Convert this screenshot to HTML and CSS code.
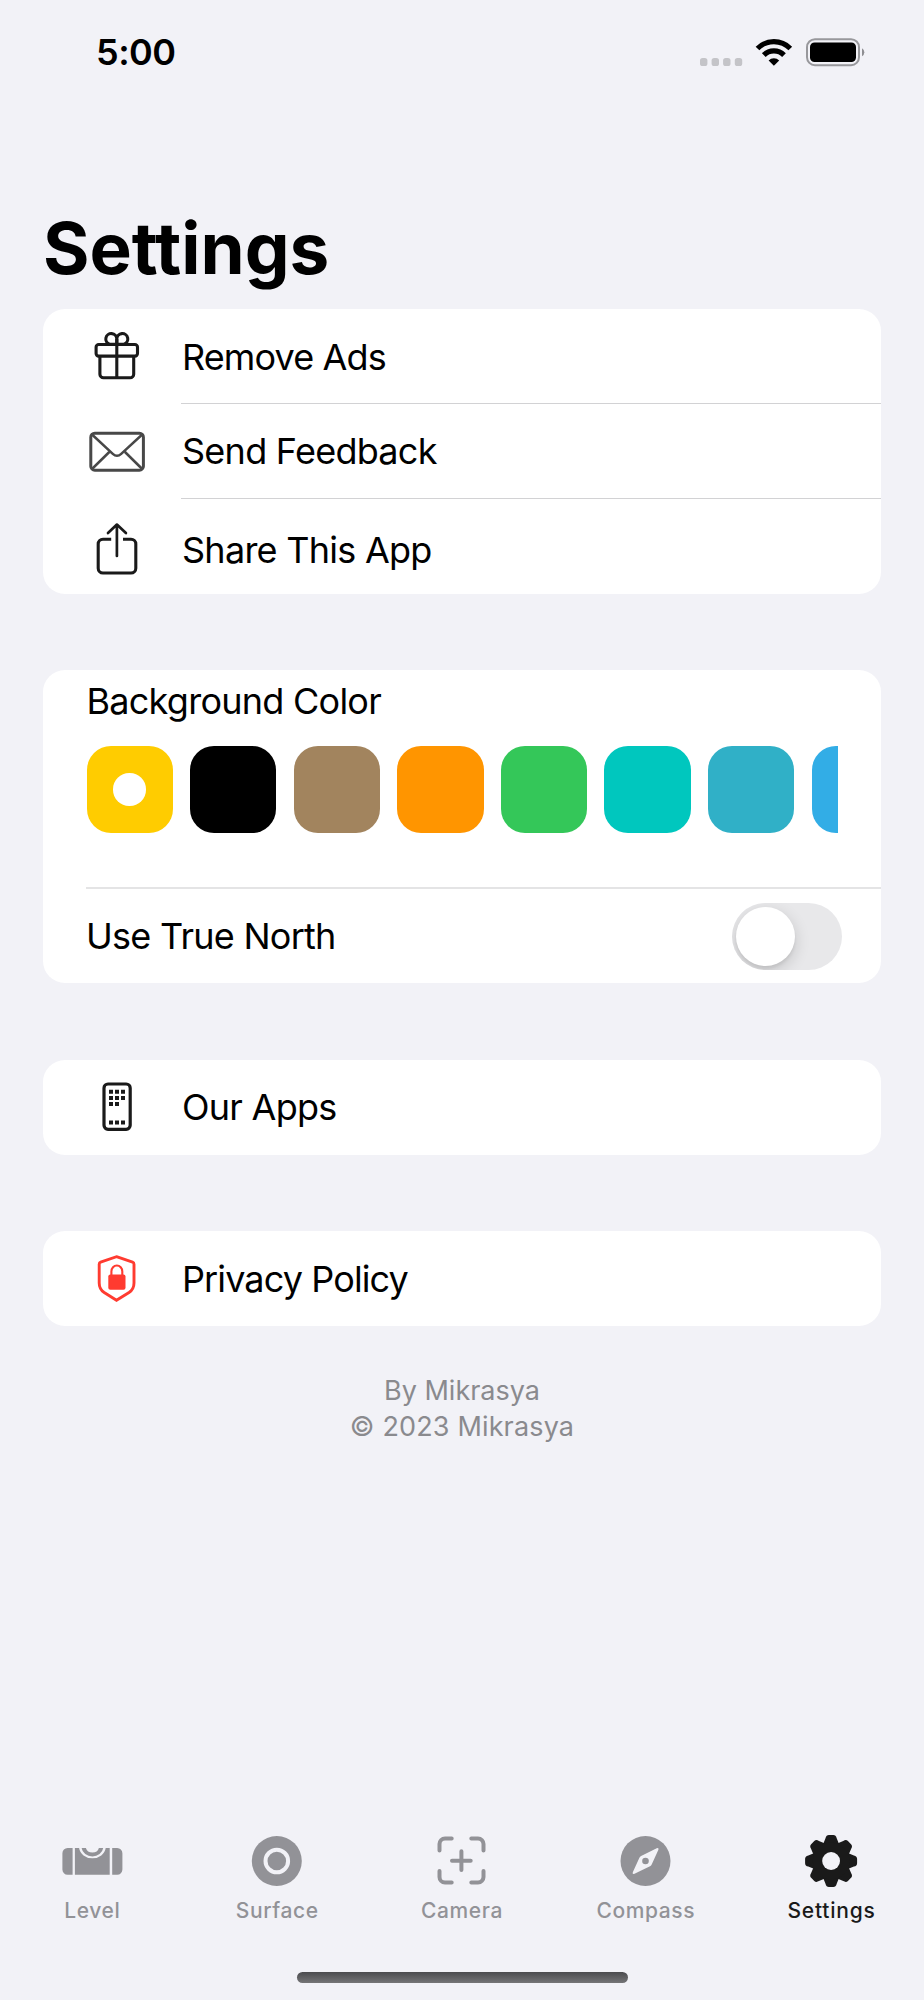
FILE: index.html
```html
<!DOCTYPE html>
<html lang="en">
<head>
<meta charset="utf-8">
<title>Settings</title>
<link rel="stylesheet" href="styles.css">
</head>
<body>
<div class="screen">
  <header class="status">
    <span class="time">5:00</span>
    <svg class="status-icons" width="168" height="32" viewBox="698 36 168 32">
      <g fill="#c4c4c8">
        <rect x="700" y="58" width="7.4" height="8" rx="2.6"/><rect x="711.6" y="58" width="7.4" height="8" rx="2.6"/>
        <rect x="723.1" y="58" width="7.4" height="8" rx="2.6"/><rect x="734.8" y="58" width="7.4" height="8" rx="2.6"/>
      </g>
      <g fill="none" stroke="#000" stroke-width="5.2">
        <path d="M757.5 48.5A23.2 23.2 0 0 1 790.3 48.5"/>
        <path d="M763.8 55.1A14.2 14.2 0 0 1 784 55.1"/>
      </g>
      <path d="M773.9 65.8L768.6 60.4A7.6 7.6 0 0 1 779.2 60.4Z"/>
      <rect x="807" y="39.2" width="52" height="26" rx="8" fill="none" stroke="#98989c" stroke-width="2"/>
      <rect x="810" y="42.5" width="46" height="19.5" rx="4.6"/>
      <path d="M862 48.2a4.6 4.6 0 0 1 0 8z" fill="#8e8e92"/>
    </svg>
  </header>

  <h1 class="title">Settings</h1>

  <main class="groups">
    <section class="card">
      <div class="row">
        <svg class="icon" width="60" height="60" viewBox="0 0 60 60" fill="none" stroke="#1a1a1a" stroke-width="3.1">
          <rect x="9.1" y="17.5" width="41.4" height="11.6" rx="2.6"/>
          <path d="M12.9 29.1V47.2a3.6 3.6 0 0 0 3.6 3.6h26.6a3.6 3.6 0 0 0 3.6-3.6V29.1M29.8 12V51"/>
          <path d="M29.8 17.3h-7.2a5.5 5.5 0 1 1 7.2-5.4zm0 0h7.2a5.5 5.5 0 1 0-7.2-5.4z"/>
        </svg>
        <span class="label remove">Remove Ads</span>
      </div>
      <div class="row high">
        <svg class="icon" width="60" height="60" viewBox="0 0 60 60" fill="none" stroke="#484848" stroke-width="3">
          <rect x="3.8" y="11.2" width="52.6" height="37" rx="4"/>
          <path d="M5 12.500l20.800 19.400q4.200 3.800 8.400 0L55.200 12.500M5 47l17.300-17M55.200 47L38 30" stroke-width="2.5"/>
        </svg>
        <span class="label feedback">Send Feedback</span>
      </div>
      <div class="row low">
        <svg class="icon" width="60" height="60" viewBox="0 0 60 60" fill="none" stroke="#1a1a1a" stroke-width="3.1">
          <path d="M24.2 19.2H16a4.8 4.8 0 0 0-4.8 4.8V48.2a4.8 4.8 0 0 0 4.8 4.8H44a4.8 4.8 0 0 0 4.8-4.8V24a4.8 4.8 0 0 0-4.8-4.8H36"/>
          <path d="M29.9 36V5M21 13l8.9-8.4 9 8.4" stroke-width="2.7" stroke-linecap="round" stroke-linejoin="round"/>
        </svg>
        <span class="label">Share This App</span>
      </div>
    </section>

    <section class="card">
      <div class="colors">
        <span class="label">Background Color</span>
        <div class="swatches">
          <i class="swatch yellow"></i><i class="swatch black"></i><i class="swatch brown"></i><i class="swatch orange"></i>
          <i class="swatch green"></i><i class="swatch mint"></i><i class="swatch teal"></i><i class="swatch blue"></i>
        </div>
      </div>
      <div class="option">
        <span class="label">Use True North</span>
        <span class="toggle"><i class="knob"></i></span>
      </div>
    </section>

    <section class="card">
      <div class="row">
        <svg class="icon" width="60" height="60" viewBox="0 0 60 60">
          <rect x="17" y="7" width="26.2" height="45.3" rx="4" fill="none" stroke="#1a1a1a" stroke-width="3.2"/>
          <path fill="#1a1a1a" d="M22 12.8h4v4h-4zM28 12.8h4v4h-4zM34 12.8h4v4h-4zM22 18.9h4v4h-4zM28 18.9h4v4h-4zM34 18.9h4v4h-4zM22 25h4v4h-4zM28 25h4v4h-4zM22 43.6h4v4h-4zM28 43.6h4v4h-4zM34 43.6h4v4h-4z"/>
        </svg>
        <span class="label apps">Our Apps</span>
      </div>
    </section>

    <section class="card">
      <div class="row">
        <svg class="icon" width="60" height="60" viewBox="0 0 60 60">
          <path d="M29.5 7.7L45.6 13.2q1.4.5 1.4 2V34q0 6.200-5 9.500L29.500 51.200 17.200 43.500Q12.200 40.200 12.200 34V15.200q0-1.500 1.400-2z" fill="none" stroke="#ff3b30" stroke-width="2.9"/>
          <rect x="21.300" y="25.500" width="17.200" height="15.200" rx="2" fill="#ff3b30"/>
          <path d="M24.400 26.500V22.500a5.450 6 0 0 1 10.900 0V26.500" fill="none" stroke="#ff3b30" stroke-width="2.100"/>
        </svg>
        <span class="label privacy">Privacy Policy</span>
      </div>
    </section>
  </main>

  <footer class="credit"><span>By Mikrasya</span><span class="copy">© 2023 Mikrasya</span></footer>

  <nav class="tabs">
    <a class="tab">
      <svg width="64" height="56" viewBox="60.400 1833 64 56" fill="#929297">
        <path d="M73 1848V1874.700H68a5.200 5.200 0 0 1-5.200-5.200V1853.200a5.200 5.200 0 0 1 5.200-5.200zM112.600 1848H117.600a5.200 5.200 0 0 1 5.200 5.200V1869.500a5.200 5.200 0 0 1-5.200 5.200H112.600z"/>
        <path d="M75.300 1848h4.200a13.400 11.800 0 0 0 26.600 0h4V1874.700H75.300z"/>
        <path d="M82 1848h4.300a6.700 6 0 0 0 13 0h4.300a10.900 9.700 0 0 1-21.600 0z"/>
      </svg><span>Level</span></a>
    <a class="tab">
      <svg width="64" height="56" viewBox="245.200 1833 64 56"><circle cx="277" cy="1861" r="25" fill="#929297"/><circle cx="277" cy="1861" r="11.300" fill="none" stroke="#f2f2f7" stroke-width="4"/></svg>
      <span>Surface</span></a>
    <a class="tab">
      <svg width="64" height="56" viewBox="430 1833 64 56" fill="none" stroke="#929297" stroke-width="4" stroke-linecap="round">
        <path d="M439.500 1850.500V1844a5.500 5.500 0 0 1 5.500-5.500H451.700M471.300 1838.500H478a5.500 5.500 0 0 1 5.500 5.500V1850.500M483.500 1871V1877a5.500 5.500 0 0 1-5.500 5.500H471.300M451.700 1882.500H445a5.500 5.500 0 0 1-5.500-5.500V1871M461.400 1851.300V1870M452 1860.700H470.700"/>
      </svg><span>Camera</span></a>
    <a class="tab">
      <svg width="64" height="56" viewBox="614.800 1833 64 56"><circle cx="645.300" cy="1861" r="25" fill="#929297"/>
        <path d="M640.900 1856L656.500 1848.200Q658.900 1847.400 658.200 1849.800L651.600 1864.200Q651 1865.600 649.800 1866.200L634.300 1873.800Q631.800 1874.600 632.600 1872.200L639.200 1857.700Q639.800 1856.600 640.900 1856z" fill="#f2f2f7"/><circle cx="645.300" cy="1861" r="3.300" fill="#929297"/></svg>
      <span class="t-compass">Compass</span></a>
    <a class="tab active">
      <svg width="64" height="56" viewBox="-32 -28 64 56">
        <defs><path id="tooth" d="M-9.500-13L-5.600-22.800Q-4.800-26-2.200-26H2.200Q4.800-26 5.600-22.800L9.500-13z"/></defs>
        <g fill="#1a1a1a" transform="translate(-.9 0)"><use href="#tooth"/><use href="#tooth" transform="rotate(45)"/><use href="#tooth" transform="rotate(90)"/><use href="#tooth" transform="rotate(135)"/><use href="#tooth" transform="rotate(180)"/><use href="#tooth" transform="rotate(225)"/><use href="#tooth" transform="rotate(270)"/><use href="#tooth" transform="rotate(315)"/>
        <circle r="18.300"/><circle r="8.900" fill="#f2f2f7"/></g>
      </svg><span>Settings</span></a>
  </nav>
  <div class="home"></div>
</div>
</body>
</html>
```

FILE: styles.css
```css
* { box-sizing: border-box; }
body {
  margin: 0;
  background: #f2f2f7;
  color: #000;
  font-family: Inter, "Liberation Sans", sans-serif;
}
.screen {
  width: 924px;
  height: 2000px;
  display: flex;
  flex-direction: column;
  overflow: hidden;
}
.status {
  height: 104px;
  padding: 0 58px 0 96px;
  display: flex;
  justify-content: space-between;
  align-items: center;
  flex: none;
}
.time { font-size: 36px; font-weight: 600; letter-spacing: -0.5px; }
.status-icons { display: block; }
.title {
  margin: 105px 0 0 43px;
  height: 80px;
  font-size: 71px;
  line-height: 78px;
  font-weight: 700;
  flex: none;
}
.groups {
  margin: 20px 43px 0;
  display: flex;
  flex-direction: column;
  gap: 76.400px;
}
.card { background: #fff; border-radius: 22px; overflow: hidden; }
.row {
  height: 95px;
  display: flex;
  align-items: center;
  padding-left: 44px;
  position: relative;
}
.row + .row::before {
  content: "";
  position: absolute;
  top: -1px;
  left: 138px;
  right: 0;
  height: 1px;
  background: #d2d2d4;
}
.row.low { padding-top: 6px; }
.row.high .label { margin-top: -2px; }
.icon { margin: 0 35px 0 0; flex: none; }
.label { font-size: 36px; line-height: 44px; white-space: nowrap; letter-spacing: -.74px; }
.remove, .privacy { letter-spacing: -.88px; }
.colors {
  height: 217px;
  padding: 9px 43px 0 43.500px;
}
.colors .label { display: block; }
.swatches {
  margin-top: 23px;
  display: flex;
  gap: 17.300px;
  overflow: hidden;
}
.swatch {
  width: 86.300px;
  height: 86.300px;
  flex: none;
  border-radius: 24px;
  display: flex;
  align-items: center;
  justify-content: center;
}
.yellow { background: #ffcc00; }
.yellow::after { content: ""; width: 32.500px; height: 32.500px; border-radius: 50%; background: #fff; }
.black { background: #000; }
.brown { background: #a2845e; }
.orange { background: #ff9500; }
.green { background: #34c759; }
.mint { background: #00c7be; }
.teal { background: #30b0c7; }
.blue { background: #32ade6; }
.option {
  height: 96px;
  margin-left: 43px;
  padding-right: 39px;
  border-top: 2px solid #e4e4e5;
  display: flex;
  align-items: center;
  justify-content: space-between;
}
.toggle {
  width: 110px;
  height: 67px;
  padding: 4px;
  border-radius: 34px;
  background: #e8e8ea;
  overflow: hidden;
}
.knob {
  display: block;
  width: 59px;
  height: 59px;
  border-radius: 50%;
  background: #fff;
  box-shadow: 0 5px 16px rgba(0, 0, 0, .16), 0 3px 3px rgba(0, 0, 0, .06);
}
.credit {
  margin-top: 47px;
  display: flex;
  flex-direction: column;
  align-items: center;
  font-size: 27px;
  line-height: 35.500px;
  color: #8a8a8e;
}
.copy { letter-spacing: .15px; }
.tabs {
  margin-top: auto;
  height: 97px;
  display: grid;
  grid-template-columns: repeat(5, 1fr);
  flex: none;
}
.tab {
  display: flex;
  flex-direction: column;
  align-items: center;
  font-size: 21px;
  line-height: 26px;
  font-weight: 500;
  letter-spacing: .6px;
  color: #929297;
}
.tab svg { display: block; margin-bottom: 9px; }
.t-compass { margin-right: 2px; }
.active { color: #1a1a1a; letter-spacing: .8px; }
.home {
  width: 331px;
  height: 11px;
  margin: 42px auto 17px 297px;
  border-radius: 6px;
  background: linear-gradient(#4b4b4e, #757577);
  flex: none;
}
```
